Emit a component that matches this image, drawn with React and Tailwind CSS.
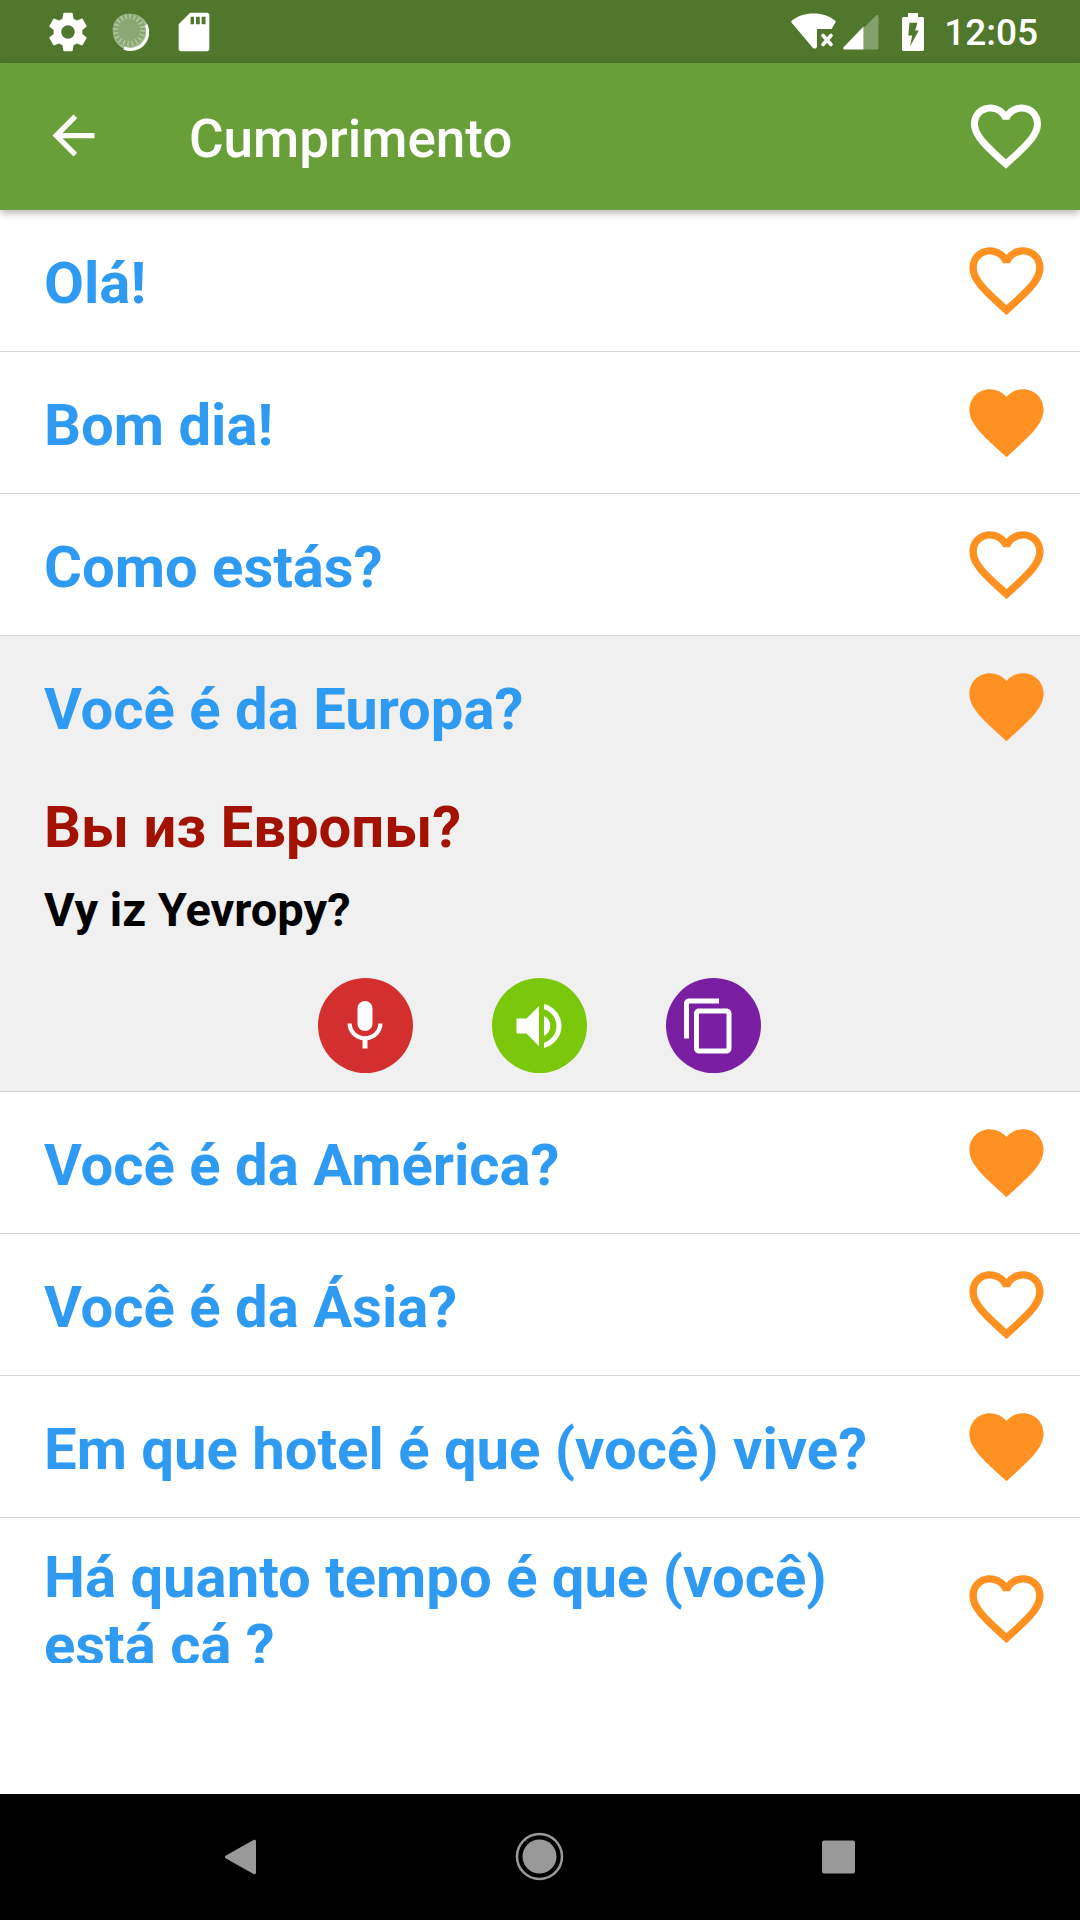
import { useState } from 'react';
import { MdArrowBack, MdContentCopy, MdFavorite, MdFavoriteBorder, MdMic, MdVolumeUp } from 'react-icons/md';

const initialPhrases = [
  { id: 1, text: 'Olá!', favorite: false },
  { id: 2, text: 'Bom dia!', favorite: true },
  { id: 3, text: 'Como estás?', favorite: false },
  { id: 4, text: 'Você é da Europa?', favorite: true, translation: 'Вы из Европы?', reading: 'Vy iz Yevropy?' },
  { id: 5, text: 'Você é da América?', favorite: true },
  { id: 6, text: 'Você é da Ásia?', favorite: false },
  { id: 7, text: 'Em que hotel é que (você) vive?', favorite: true },
  { id: 8, text: 'Há quanto tempo é que (você) está cá ?', favorite: false },
];

function StatusBar() {
  return (
    <div className="flex h-[63px] shrink-0 items-center justify-between bg-[#50772b] pr-[42px] pl-[45px] text-white">
      <div className="flex items-center gap-[17px]">
        <svg viewBox="0 0 24 24" className="size-[46px]" fill="currentColor">
          <path d="M19.43 12.98c.04-.32.07-.64.07-.98s-.03-.66-.07-.98l2.11-1.65c.19-.15.24-.42.12-.64l-2-3.46c-.12-.22-.39-.3-.61-.22l-2.49 1c-.52-.4-1.08-.73-1.69-.98l-.38-2.65C14.46 2.18 14.25 2 14 2h-4c-.25 0-.46.18-.49.42l-.38 2.65c-.61.25-1.17.59-1.69.98l-2.49-1c-.23-.09-.49 0-.61.22l-2 3.46c-.13.22-.07.49.12.64l2.11 1.65c-.04.32-.07.65-.07.98s.03.66.07.98l-2.11 1.65c-.19.15-.24.42-.12.64l2 3.46c.12.22.39.3.61.22l2.49-1c.52.4 1.08.73 1.69.98l.38 2.65c.03.24.24.42.49.42h4c.25 0 .46-.18.49-.42l.38-2.65c.61-.25 1.17-.59 1.69-.98l2.49 1c.23.09.49 0 .61-.22l2-3.46c.12-.22.07-.49-.12-.64l-2.11-1.65zM12 15.5c-1.93 0-3.5-1.57-3.5-3.5s1.57-3.5 3.5-3.5 3.5 1.57 3.5 3.5-1.57 3.5-3.5 3.5z" />
        </svg>
        <svg viewBox="0 0 46 46" className="size-[46px]" fill="none">
          <circle cx="23" cy="23" r="18" fill="#a5bb93" />
          <path d="M38 16A17 17 0 0 1 16 39" stroke="#fff" strokeWidth="3" />
          <circle cx="21" cy="21" r="16.5" fill="#8aa873" />
          <circle cx="21" cy="21" r="13.5" stroke="#b3c8a0" strokeWidth="5" strokeDasharray="1.5 2.74" />
        </svg>
        <svg viewBox="0 0 24 24" className="size-[46px]" fill="currentColor">
          <path d="M18.8 2H10L4 8v12.8c0 .7.5 1.200 1.200 1.200h13.600c.7 0 1.200-.5 1.200-1.200V3.200c0-.7-.5-1.200-1.200-1.200zM12 8h-1.800V4H12v4zm3 0h-2V4h2v4zm3 0h-2V4h2v4z" />
        </svg>
      </div>
      <div className="flex items-center">
        <svg viewBox="0 0 46 40" className="h-[40px] w-[46px]" fill="currentColor">
          <path d="M2 8.500C7.500 4 15 1.500 23.500 1.500S39.500 4 45 8.500c.8.700.9 1.400.3 2.200L41.500 17H27v18c-1.200 2-3.500 2-4.700.3L1.700 10.800c-.6-.8-.5-1.600.3-2.300z" />
          <path d="M33 23.500l8 9M41 23.500l-8 9" stroke="currentColor" strokeWidth="3.6" strokeLinecap="round" />
        </svg>
        <svg viewBox="0 0 36 40" className="ml-[7px] h-[40px] w-[36px]" fill="currentColor">
          <path d="M20.500 16L33 3.500c1-1 2.500-.6 2.500 1V36c0 .8-.6 1.500-1.500 1.500H20.500z" opacity=".3" />
          <path d="M20.500 14.500v23H1.500c-1.300 0-1.800-1.300-.9-2.200z" />
        </svg>
        <svg viewBox="0 0 24 40" className="ml-[22px] h-[40px] w-[24px]" fill="currentColor" fillRule="evenodd">
          <path d="M7 1h10v4h4.500c.8 0 1.500.7 1.500 1.500v31c0 .8-.7 1.500-1.500 1.500h-19C1.700 39 1 38.300 1 37.500v-31C1 5.700 1.700 5 2.500 5H7zM8.500 10.700h7.900l-2.200 7.800h3.600L9 34.500l2.200-11H7.300z" />
        </svg>
        <span className="ml-[19px] pt-[2px] text-[37px] leading-[44px] font-medium">12:05</span>
      </div>
    </div>
  );
}

function Phrase({ phrase, onToggle }) {
  const Heart = phrase.favorite ? MdFavorite : MdFavoriteBorder;
  const open = Boolean(phrase.translation);

  return (
    <li className={open ? 'border-b border-[#d5d5d5] bg-[#f0f0f0]' : 'border-b border-[#d5d5d5] bg-white'}>
      <div className="flex min-h-[141px] items-center justify-between pr-[29px] pl-[44px]">
        <h2 className="max-w-[850px] pt-[25px] pb-[20px] text-[58px] leading-[68px] font-bold text-[#2f9af2]">{phrase.text}</h2>
        <button className="shrink-0 text-[#ff9122]" aria-label="Favorito" aria-pressed={phrase.favorite} onClick={() => onToggle(phrase.id)}>
          <Heart className="size-[89px]" />
        </button>
      </div>
      {open && (
        <div className="pt-[16px] pr-[46px] pb-[18px] pl-[44px] font-bold">
          <p className="text-[58px] leading-[68px] text-[#a31200]">{phrase.translation}</p>
          <p className="mt-[21px] text-[47px] leading-[55px] text-black">{phrase.reading}</p>
          <div className="mt-[41px] flex justify-center gap-[79px] text-white">
            <button className="flex size-[95px] items-center justify-center rounded-full bg-[#d32f2f]" aria-label="Gravar">
              <MdMic className="size-[60px]" />
            </button>
            <button className="flex size-[95px] items-center justify-center rounded-full bg-[#7ac70c]" aria-label="Ouvir">
              <MdVolumeUp className="size-[60px]" />
            </button>
            <button className="flex size-[95px] items-center justify-center rounded-full bg-[#7b1fa2] pr-[9px]" aria-label="Copiar">
              <MdContentCopy className="size-[60px]" />
            </button>
          </div>
        </div>
      )}
    </li>
  );
}

function NavBar() {
  return (
    <nav className="flex h-[126px] shrink-0 items-center justify-center gap-[236px] bg-black pr-[2px] text-[#999]">
      <button aria-label="Voltar ao ecrã anterior">
        <svg viewBox="0 0 63 63" className="size-[63px]" fill="currentColor">
          <path d="M17 29.500L44.500 14c1.300-.7 2.500 0 2.500 1.500v31c0 1.500-1.200 2.200-2.500 1.500L17 32.500c-1.400-.8-1.400-2.200 0-3z" />
        </svg>
      </button>
      <button aria-label="Ecrã inicial">
        <svg viewBox="0 0 63 63" className="size-[63px]" fill="currentColor">
          <circle cx="31.500" cy="30.500" r="17" />
          <circle cx="31.500" cy="30.500" r="22.500" fill="none" stroke="currentColor" strokeWidth="2.500" />
        </svg>
      </button>
      <button aria-label="Aplicações recentes">
        <svg viewBox="0 0 63 63" className="size-[63px]" fill="currentColor">
          <rect x="15" y="14.500" width="33" height="33" rx="2" />
        </svg>
      </button>
    </nav>
  );
}

export default function App() {
  const [phrases, setPhrases] = useState(initialPhrases);

  function toggle(id) {
    setPhrases(phrases.map((p) => (p.id === id ? { ...p, favorite: !p.favorite } : p)));
  }

  return (
    <div className="flex h-screen flex-col bg-white font-['Roboto',sans-serif]">
      <StatusBar />
      <header className="z-10 flex h-[147px] shrink-0 items-center bg-[#689f38] pr-[32px] pb-[2px] pl-[42px] text-white shadow-[0_3px_8px_rgba(0,0,0,0.3)]">
        <button aria-label="Voltar">
          <MdArrowBack className="size-[63px]" />
        </button>
        <h1 className="ml-[84px] flex-1 pt-[6px] text-[53px] leading-[62px] font-medium">Cumprimento</h1>
        <button aria-label="Favoritos">
          <MdFavoriteBorder className="size-[84px]" />
        </button>
      </header>
      <main className="mb-[131px] min-h-0 flex-1 overflow-hidden">
        <ul>
          {phrases.map((p) => (
            <Phrase key={p.id} phrase={p} onToggle={toggle} />
          ))}
        </ul>
      </main>
      <NavBar />
    </div>
  );
}
